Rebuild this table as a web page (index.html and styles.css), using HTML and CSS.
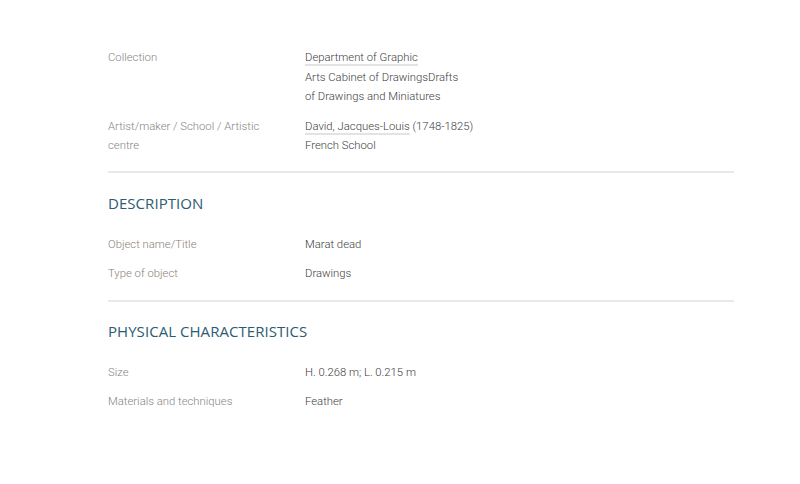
FILE: index.html
```html
<!DOCTYPE html>
<html>
<head>
<meta charset="utf-8">
<link rel="stylesheet" href="styles.css">
</head>
<body>
<main class="page">
  <section class="block first">
    <div class="row">
      <div class="label">Collection</div>
      <div class="value"><a class="link">Department of Graphic</a><br>Arts Cabinet of DrawingsDrafts<br>of Drawings and Miniatures</div>
    </div>
    <div class="row">
      <div class="label">Artist/maker / School / Artistic centre</div>
      <div class="value"><a class="link">David, Jacques-Louis</a> (1748-1825)<br>French School</div>
    </div>
  </section>
  <section class="block">
    <h2 class="heading">DESCRIPTION</h2>
    <div class="row">
      <div class="label warm">Object name/Title</div>
      <div class="value">Marat dead</div>
    </div>
    <div class="row">
      <div class="label warm">Type of object</div>
      <div class="value">Drawings</div>
    </div>
  </section>
  <section class="block last">
    <h2 class="heading">PHYSICAL CHARACTERISTICS</h2>
    <div class="row">
      <div class="label">Size</div>
      <div class="value">H. 0.268 m; L. 0.215 m</div>
    </div>
    <div class="row">
      <div class="label">Materials and techniques</div>
      <div class="value">Feather</div>
    </div>
  </section>
</main>
</body>
</html>
```
FILE: styles.css
```css
html, body {
  margin: 0;
  padding: 0;
  background: #ffffff;
}
body {
  font-family: Roboto, "Liberation Sans", sans-serif;
  font-weight: 300;
  font-size: 11.3px;
  line-height: 19.5px;
  color: #444444;
}
.page {
  width: 626px;
  margin: 0 0 0 108px;
  padding-top: 48px;
}
.block {
  border-bottom: 2px solid #e4eaee;
  padding-bottom: 16px;
  display: flex;
  flex-direction: column;
  gap: 10px;
}
.block.first {
  padding-bottom: 15px;
}
.block + .block {
  padding-top: 18px;
}
.block.last {
  border-bottom: none;
  padding-top: 17px;
}
.heading {
  margin: 0 0 10px 0;
  font-family: "Open Sans", sans-serif;
  font-weight: 400;
  font-size: 15px;
  line-height: 24px;
  color: #2d5b70;
  letter-spacing: 0.05px;
}
.row {
  display: flex;
}
.label {
  width: 197px;
  flex: none;
  color: #858585;
  padding-right: 30px;
  box-sizing: border-box;
}
.label.warm {
  color: #8a8076;
}
.value {
  color: #404040;
}
.link {
  color: #404040;
  text-decoration: none;
  border-bottom: 2px solid #e3e3e3;
}
```
